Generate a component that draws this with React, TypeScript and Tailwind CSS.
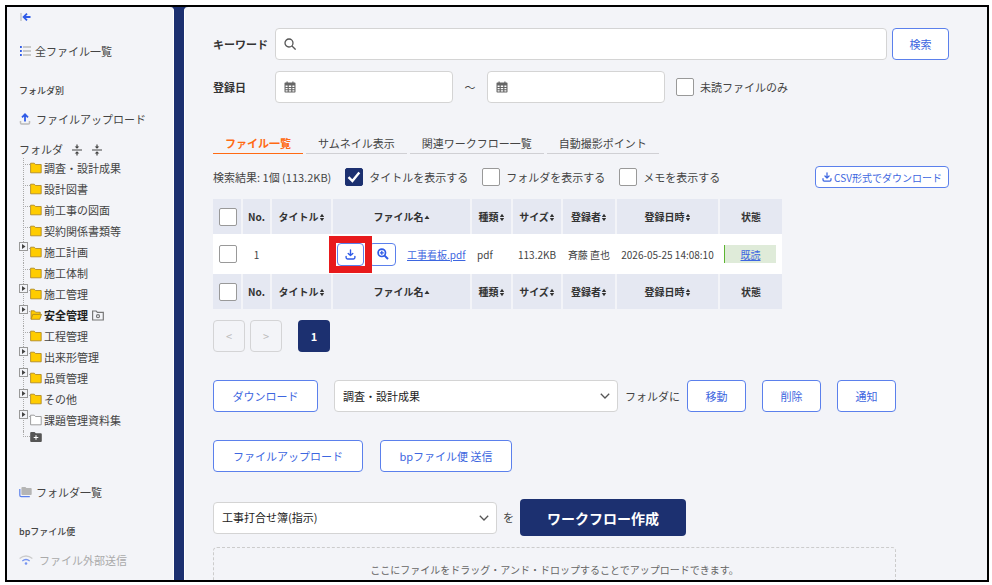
import { useState } from 'react'
import type { InputHTMLAttributes, ReactNode } from 'react'

interface Folder {
  name: string
  expandable?: boolean
  open?: boolean
  empty?: boolean
}

const folders: Folder[] = [
  { name: '調査・設計成果' },
  { name: '設計図書' },
  { name: '前工事の図面' },
  { name: '契約関係書類等' },
  { name: '施工計画', expandable: true },
  { name: '施工体制' },
  { name: '施工管理', expandable: true },
  { name: '安全管理', expandable: true, open: true },
  { name: '工程管理' },
  { name: '出来形管理', expandable: true },
  { name: '品質管理', expandable: true },
  { name: 'その他', expandable: true },
  { name: '課題管理資料集', expandable: true, empty: true },
]

const tabs = ['ファイル一覧', 'サムネイル表示', '関連ワークフロー一覧', '自動撮影ポイント']

const columns: { label: string; sort?: 'both' | 'asc' }[] = [
  { label: 'No.' },
  { label: 'タイトル', sort: 'both' },
  { label: 'ファイル名', sort: 'asc' },
  { label: '種類', sort: 'both' },
  { label: 'サイズ', sort: 'both' },
  { label: '登録者', sort: 'both' },
  { label: '登録日時', sort: 'both' },
  { label: '状態' },
]

function FolderIcon({ open, empty }: { open?: boolean; empty?: boolean }) {
  if (open) {
    return (
      <svg viewBox="0 0 12 12" className="mb-[2px] h-3 w-3 shrink-0" fill="#fc0" stroke="#a8821c" strokeWidth="0.8" strokeLinejoin="round">
        <path d="M1 10V1.8h3.4l1.2 1.4h4.6v2" />
        <path d="M1 10.3 2.8 5.4h8.7l-1.8 4.9z" />
      </svg>
    )
  }
  return (
    <svg viewBox="0 0 12 12" className="mb-[2px] h-3 w-3 shrink-0" fill={empty ? '#fff' : '#fc0'} stroke={empty ? '#888' : '#a8821c'} strokeWidth="0.8" strokeLinejoin="round">
      <path d="M.6 1.2h3.6l1.4 1.3h5.6v8.3H.6z" />
    </svg>
  )
}

function DownloadIcon({ className }: { className: string }) {
  return (
    <svg viewBox="0 0 12 12" className={className} fill="none" stroke="currentColor" strokeWidth="1.5" strokeLinecap="round" strokeLinejoin="round">
      <path d="M6 1v6M3.5 4.8 6 7.2l2.5-2.4M1.2 8v1.4q0 1.5 1.5 1.5h6.6q1.5 0 1.5-1.5V8" />
    </svg>
  )
}

function CalendarIcon() {
  return (
    <svg viewBox="0 0 12 12" className="h-3 w-3 shrink-0 text-[#666]">
      <path
        fill="currentColor"
        fillRule="evenodd"
        d="M2.5.5h1.2v1h4.6v-1h1.2v1h1.3q.7 0 .7.7v8.6q0 .7-.7.7H1.2q-.7 0-.7-.7V2.2q0-.7.7-.7h1.3zM1.6 4.6V6h2V4.6zm3.2 0V6h2.4V4.6zm3.6 0V6h2V4.6zM1.6 7v1.3h2V7zm3.2 0v1.3h2.4V7zm3.6 0v1.3h2V7zM1.6 9.3v1.1h2V9.3zm3.2 0v1.1h2.4V9.3zm3.6 0v1.1h2V9.3z"
      />
    </svg>
  )
}

function SplitIcon() {
  return (
    <svg viewBox="0 0 12 12" className="h-3 w-3" fill="#444" stroke="#444" strokeWidth="1.2">
      <path d="M1 6h10M6 .5V3M6 9v2.5" />
      <path stroke="none" d="M3.7 2.4h4.6L6 4.8zM3.7 9.6h4.6L6 7.2z" />
    </svg>
  )
}

function SortIcon({ kind }: { kind: 'both' | 'asc' }) {
  return (
    <svg viewBox="0 0 6 9" className="mt-[2px] h-[9px] w-[6px] shrink-0" fill="#333">
      {kind === 'both' ? <path d="M.8 4 3 .8 5.200 4zM.8 5h4.400L3 8.200z" /> : <path d="M.5 6 3 2.500 5.500 6z" />}
    </svg>
  )
}

function Checkbox(props: InputHTMLAttributes<HTMLInputElement>) {
  return (
    <span className="grid size-[18px] shrink-0 place-items-center">
      <input
        type="checkbox"
        className="peer col-start-1 row-start-1 size-[18px] appearance-none rounded-xs border border-[#999] bg-white checked:border-[#1c3070] checked:bg-[#1c3070]"
        {...props}
      />
      <svg viewBox="0 0 14 14" className="pointer-events-none invisible col-start-1 row-start-1 size-[14px] peer-checked:visible" fill="none" stroke="#fff" strokeWidth="2.4">
        <path d="M1.5 7.2 5.4 11l6.9-8.500" />
      </svg>
    </span>
  )
}

function OutlineButton({ children, className = '' }: { children: ReactNode; className?: string }) {
  return (
    <button type="button" className={`h-8 shrink-0 rounded border border-[#5b80ec] bg-white text-[11px] text-[#3d66e0] ${className}`}>
      {children}
    </button>
  )
}

function Select({ label, options }: { label: string; options: string[] }) {
  return (
    <div className="grid w-[284px] items-center">
      <select aria-label={label} className="col-start-1 row-start-1 h-8 w-full appearance-none rounded border border-[#d4d4d4] bg-white pr-8 pl-2 text-[11px] text-[#222]">
        {options.map((option) => (
          <option key={option}>{option}</option>
        ))}
      </select>
      <svg viewBox="0 0 10 10" className="pointer-events-none col-start-1 row-start-1 mr-2 size-[10px] justify-self-end" fill="none" stroke="#555" strokeWidth="1.3">
        <path d="M.8 2.8 5 7l4.2-4.2" />
      </svg>
    </div>
  )
}

function DateInput({ label }: { label: string }) {
  return (
    <div className="flex h-8 w-[178px] items-center gap-2 rounded border border-[#d4d4d4] bg-white px-2">
      <CalendarIcon />
      <input type="text" aria-label={label} className="min-w-0 flex-1 outline-none" />
    </div>
  )
}

function HeaderCells({ id }: { id: string }) {
  return (
    <tr className="h-[35px] bg-[#e5e8f2] text-[#333]">
      <th className="border-r-2 border-[#f3f4f8] pl-[6px]">
        <Checkbox id={id} aria-label="すべて選択" />
      </th>
      {columns.map(({ label, sort }) => (
        <th key={label} className="border-r-2 border-[#f3f4f8] font-bold last:border-r-0">
          <span className="flex items-center justify-center whitespace-nowrap">
            {label}
            {sort && <SortIcon kind={sort} />}
          </span>
        </th>
      ))}
    </tr>
  )
}

function FolderTree() {
  return (
    <ul>
      {folders.map(({ name, expandable, open, empty }) => (
        <li
          key={name}
          className="relative flex h-[21px] items-center pl-[11px] before:absolute before:top-0 before:left-1 before:h-full before:border-l before:border-dotted before:border-[#aaa] after:absolute after:top-[6px] after:left-1 after:w-[7px] after:border-t after:border-dotted after:border-[#aaa]"
        >
          {expandable && (
            <button type="button" aria-label={`${name}を開く`} className="absolute top-0 left-0 z-10 grid size-[9px] place-items-center border border-[#999] bg-[#f3f4f8]">
              <svg viewBox="0 0 5 5" className="size-[5px]" fill="#444">
                <path d="M1 0 4.5 2.5 1 5z" />
              </svg>
            </button>
          )}
          <FolderIcon open={open} empty={empty} />
          <a href="#" className={open ? 'ml-[2px] font-bold text-[#222]' : 'ml-[2px]'}>
            {name}
          </a>
          {open && (
            <svg viewBox="0 0 12 11" className="ml-1 h-[11px] w-3" fill="none" stroke="#777" strokeWidth="1.2">
              <path d="M.6 1h3.6l1.2 1.300h5.900v7.700H.6z" />
              <circle cx="6" cy="6.2" r="1.500" />
            </svg>
          )}
        </li>
      ))}
      <li className="relative flex h-3 items-center pl-[11px] before:absolute before:top-0 before:left-1 before:h-[6px] before:w-[7px] before:border-b before:border-l before:border-dotted before:border-[#aaa]">
        <button type="button" aria-label="フォルダを追加">
          <svg viewBox="0 0 12 10" className="block h-[10px] w-3">
            <path fill="#555" d="M1.2 0h3.3l1.3 1.2h5q1 0 1 1V9q0 1-1 1H1.2q-1 0-1-1V1q0-1 1-1z" />
            <path stroke="#fff" strokeWidth="1.1" d="M6 3.2v4.6M3.7 5.5h4.6" />
          </svg>
        </button>
      </li>
    </ul>
  )
}

function Sidebar() {
  return (
    <nav className="w-[167px] shrink-0 overflow-hidden rounded-tr border-r border-white bg-[#f3f4f8] pl-3 text-[11px] whitespace-nowrap text-[#444]">
      <button type="button" aria-label="メニューを閉じる" className="mt-1 flex h-3 items-center">
        <svg viewBox="0 0 12 12" className="size-3" fill="none" strokeWidth="1.8">
          <path stroke="#bbb" strokeWidth="1.2" d="M2 2v8" />
          <path stroke="#2f5be7" d="M11.5 6H5M8 2.600 4.600 6 8 9.400" />
        </svg>
      </button>
      <a href="#" className="mt-[18px] flex h-5 items-center gap-1">
        <svg viewBox="0 0 12 12" className="size-3">
          <path stroke="#bbb" strokeWidth="1.3" d="M4 2h8M4 6h8M4 10h8" />
          <path stroke="#2f5be7" strokeWidth="1.8" d="M1 2h1.800M1 6h1.800M1 10h1.800" />
        </svg>
        全ファイル一覧
      </a>
      <h2 className="mt-5 flex h-5 items-center text-[9px] font-medium">フォルダ別</h2>
      <a href="#" className="mt-2 flex h-5 items-center gap-[5px]">
        <svg viewBox="0 0 12 12" className="size-3" fill="none">
          <path stroke="#bbb" strokeWidth="1.5" d="M1.5 8v2q0 1 1 1h7q1 0 1-1V8" />
          <path stroke="#2f5be7" strokeWidth="1.8" d="M6 8.500v-7M3 4.300l3-3 3 3" />
        </svg>
        ファイルアップロード
      </a>
      <div className="mt-3 flex h-[17px] items-center gap-2">
        フォルダ
        <button type="button" aria-label="すべて閉じる"><SplitIcon /></button>
        <button type="button" aria-label="すべて開く"><SplitIcon /></button>
      </div>
      <FolderTree />
      <a href="#" className="mt-[39px] flex h-5 items-center gap-1">
        <svg viewBox="0 0 13 12" className="h-3 w-[13px]">
          <path fill="none" stroke="#5b80ec" strokeWidth="1.2" d="M.8 3v6.200q0 1.400 1.400 1.400h8.600" />
          <path fill="#b5b5b5" d="M3.400 1h3l1 1h4.300q1 0 1 1v5q0 1-1 1H3.400q-1 0-1-1V2q0-1 1-1z" />
        </svg>
        フォルダ一覧
      </a>
      <h2 className="mt-5 flex h-5 items-center text-[9px] font-medium">bpファイル便</h2>
      <a href="#" className="mt-2 flex h-5 items-center gap-[6px] text-[#aaa]">
        <svg viewBox="0 0 14 12" className="h-3 w-[14px]" fill="none" strokeWidth="1.3">
          <path stroke="#ccc" d="M.6 4.500q6.400-5 12.800 0" />
          <path stroke="#7593f0" d="M3.300 7q3.700-3 7.400 0" />
          <circle cx="7" cy="9.500" r="1.300" fill="#7593f0" />
        </svg>
        ファイル外部送信
      </a>
    </nav>
  )
}

export default function App() {
  const [activeTab, setActiveTab] = useState(tabs[0])

  return (
    <div className="h-screen bg-white pt-[5px] pr-[3px] pb-[3px] pl-[5px] font-['Noto_Sans_CJK_JP',sans-serif]">
      <div className="flex h-full overflow-hidden border-2 border-black bg-[#1c3070]">
        <Sidebar />
        <main className="ml-[10px] min-w-0 flex-1 overflow-hidden rounded-tl border-l border-white bg-[#f3f4f8] pt-[21px] pr-[38px] pl-7 text-[11px] text-[#444]">
          <div className="flex items-center">
            <label htmlFor="keyword" className="w-[62px] shrink-0 font-bold text-[#333]">キーワード</label>
            <div className="flex h-8 flex-1 items-center gap-2 rounded border border-[#d4d4d4] bg-white px-2">
              <svg viewBox="0 0 12 12" className="size-3" fill="none" stroke="#555" strokeWidth="1.3">
                <circle cx="5" cy="5" r="4" />
                <path d="m8 8 3.6 3.6" />
              </svg>
              <input id="keyword" type="text" className="min-w-0 flex-1 outline-none" />
            </div>
            <OutlineButton className="ml-[5px] w-[57px]">検索</OutlineButton>
          </div>

          <div className="mt-[11px] flex items-center">
            <span className="w-[62px] shrink-0 font-bold text-[#333]">登録日</span>
            <DateInput label="登録日（開始）" />
            <span className="w-[34px] text-center">～</span>
            <DateInput label="登録日（終了）" />
            <label className="ml-[11px] flex items-center gap-[6px]">
              <Checkbox />
              未読ファイルのみ
            </label>
          </div>

          <div role="tablist" className="mt-[30px] flex gap-[3px]">
            {tabs.map((tab) => (
              <button
                key={tab}
                type="button"
                role="tab"
                aria-selected={tab === activeTab}
                onClick={() => setActiveTab(tab)}
                className={
                  tab === activeTab
                    ? 'h-[21px] border-b border-[#ff6a13] px-3 font-bold text-[#ff6a13]'
                    : 'h-[21px] border-b border-[#d0d0d4] px-3'
                }
              >
                {tab}
              </button>
            ))}
          </div>

          <div className="mt-3 flex h-[22px] items-center whitespace-nowrap">
            <span>検索結果: 1個 (113.2KB)</span>
            <label className="ml-[14px] flex items-center gap-[6px]">
              <Checkbox defaultChecked />
              タイトルを表示する
            </label>
            <label className="ml-[14px] flex items-center gap-[6px]">
              <Checkbox />
              フォルダを表示する
            </label>
            <label className="ml-[14px] flex items-center gap-[6px]">
              <Checkbox />
              メモを表示する
            </label>
            <button type="button" className="ml-auto flex h-[22px] w-[134px] items-center justify-center gap-[2px] rounded border border-[#5b80ec] bg-white text-[10px] text-[#3d66e0]">
              <DownloadIcon className="size-[10px]" />
              CSV形式でダウンロード
            </button>
          </div>

          <table className="mt-[11px] table-fixed border-collapse text-[10px]">
            <colgroup>
              <col className="w-[29px]" />
              <col className="w-[29px]" />
              <col className="w-[61px]" />
              <col className="w-[139px]" />
              <col className="w-[41px]" />
              <col className="w-[50px]" />
              <col className="w-[54px]" />
              <col className="w-[103px]" />
              <col className="w-[63px]" />
            </colgroup>
            <thead>
              <HeaderCells id="select-all-top" />
            </thead>
            <tbody>
              <tr className="h-10 bg-white whitespace-nowrap">
                <td className="pl-[6px]">
                  <Checkbox aria-label="工事看板.pdfを選択" />
                </td>
                <td className="text-center">1</td>
                <td></td>
                <td>
                  <div className="flex items-center pl-[5px]">
                    <div className="relative">
                      <button type="button" aria-label="ダウンロード" className="grid h-[23px] w-[27px] place-items-center rounded border border-[#5b80ec] bg-white text-[#2f5be7]">
                        <DownloadIcon className="size-[11px]" />
                      </button>
                      <span className="pointer-events-none absolute -inset-x-2 -inset-y-[7px] z-10 border-7 border-[#e81a1c]" />
                    </div>
                    <button type="button" aria-label="プレビュー" className="ml-[5px] grid h-[23px] w-[27px] place-items-center rounded border border-[#5b80ec] bg-white text-[#2f5be7]">
                      <svg viewBox="0 0 12 12" className="size-3" fill="none" stroke="currentColor" strokeWidth="1.7">
                        <circle cx="4.8" cy="4.8" r="3.7" />
                        <path strokeWidth="2" d="m7.6 7.6 3.4 3.4" />
                        <path strokeWidth="1.3" d="M4.8 2.8v4M2.8 4.8h4" />
                      </svg>
                    </button>
                    <a href="#" className="ml-[11px] text-[#3d66e0] underline">工事看板.pdf</a>
                  </div>
                </td>
                <td className="pl-[6px]">pdf</td>
                <td className="text-center">113.2KB</td>
                <td className="text-center">斉藤 直也</td>
                <td className="text-center">2026-05-25 14:08:10</td>
                <td className="pr-[6px] pl-[5px]">
                  <a href="#" className="flex h-[18px] items-center justify-center border-l border-[#5cb531] bg-[#dfebd9] text-[#3d66e0] underline">既読</a>
                </td>
              </tr>
            </tbody>
            <tfoot>
              <HeaderCells id="select-all-bottom" />
            </tfoot>
          </table>

          <div className="mt-[11px] flex items-center">
            <button type="button" disabled aria-label="前のページ" className="size-8 rounded border border-[#d4d4d6] text-[#bbb]">&lt;</button>
            <button type="button" disabled aria-label="次のページ" className="ml-[5px] size-8 rounded border border-[#d4d4d6] text-[#bbb]">&gt;</button>
            <button type="button" className="ml-4 size-8 rounded bg-[#1c3070] font-bold text-white">1</button>
          </div>

          <div className="mt-7 flex items-center whitespace-nowrap">
            <OutlineButton className="w-[105px]">ダウンロード</OutlineButton>
            <div className="mr-[7px] ml-4"><Select label="移動先フォルダ" options={['調査・設計成果', '設計図書', '施工計画']} /></div>
            フォルダに
            <OutlineButton className="ml-[7px] w-[59px]">移動</OutlineButton>
            <OutlineButton className="ml-4 w-[59px]">削除</OutlineButton>
            <OutlineButton className="ml-4 w-[59px]">通知</OutlineButton>
          </div>

          <div className="mt-7 flex gap-[17px]">
            <OutlineButton className="w-[150px]">ファイルアップロード</OutlineButton>
            <OutlineButton className="w-[132px]">bpファイル便 送信</OutlineButton>
          </div>

          <div className="mt-[27px] flex items-center gap-[6px]">
            <Select label="ワークフロー種別" options={['工事打合せ簿(指示)', '工事打合せ簿(協議)']} />
            を
            <button type="button" className="h-[37px] w-[166px] rounded bg-[#1c3070] text-sm font-bold text-white">ワークフロー作成</button>
          </div>

          <div className="mt-[11px] mr-[53px] rounded border border-dashed border-[#ccc] py-[14px] text-center text-[10px] text-[#666]">
            ここにファイルをドラッグ・アンド・ドロップすることでアップロードできます。
          </div>
        </main>
      </div>
    </div>
  )
}
